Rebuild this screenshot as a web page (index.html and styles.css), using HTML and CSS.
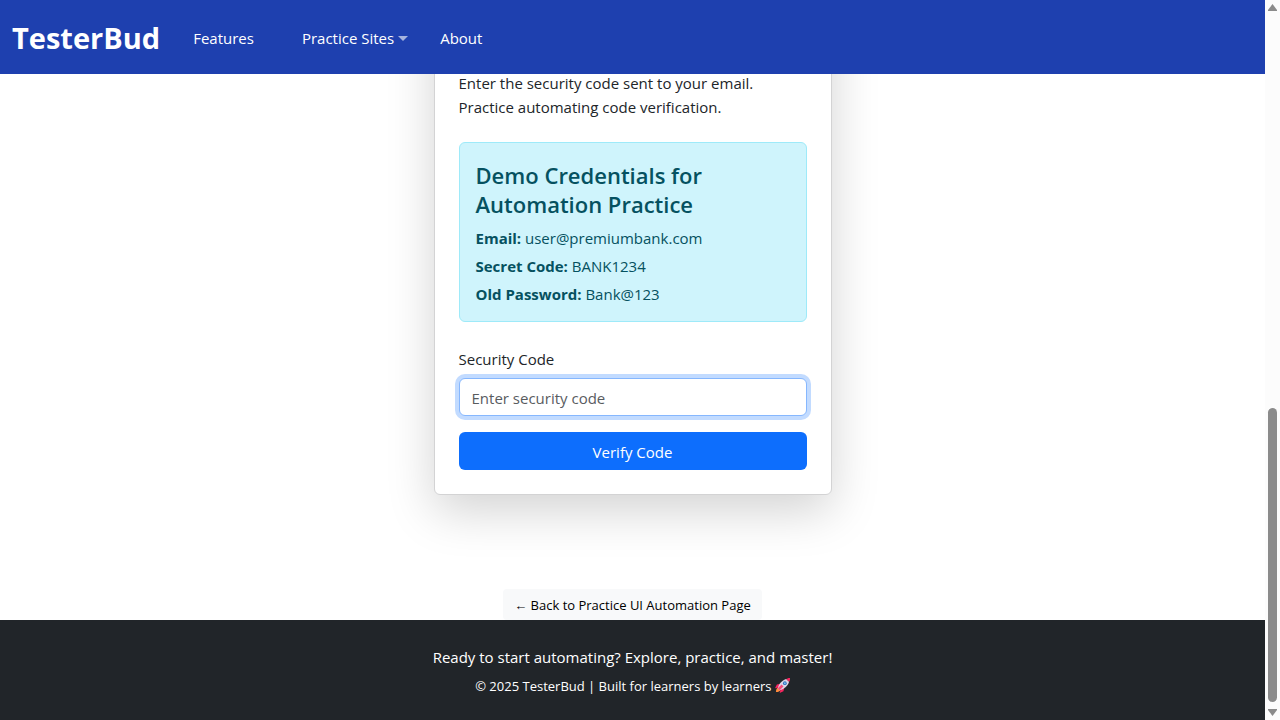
FILE: index.html
```html
<!DOCTYPE html>
<html lang="en">
<head>
<meta charset="utf-8">
<title>TesterBud</title>
<meta name="viewport" content="width=device-width, initial-scale=1">
<link rel="stylesheet" href="styles.css">
</head>
<body>
<div class="page">
  <header class="navbar">
    <a class="brand" href="#">TesterBud</a>
    <nav class="nav">
      <a class="nav-link nav-link-wide" href="#">Features</a>
      <a class="nav-link dropdown" href="#">Practice Sites<span class="caret"></span></a>
      <a class="nav-link" href="#">About</a>
    </nav>
  </header>
  <main class="content">
    <section class="card">
      <p class="intro">Enter the security code sent to your email. Practice automating code verification.</p>
      <div class="alert">
        <h4 class="alert-title">Demo Credentials for Automation Practice</h4>
        <p class="credential"><strong>Email:</strong> user@premiumbank.com</p>
        <p class="credential"><strong>Secret Code:</strong> BANK1234</p>
        <p class="credential"><strong>Old Password:</strong> Bank@123</p>
      </div>
      <form class="form">
        <label class="label" for="code">Security Code</label>
        <input class="input" id="code" type="text" placeholder="Enter security code">
        <button class="submit" type="button">Verify Code</button>
      </form>
    </section>
    <a class="back" href="#">← Back to Practice UI Automation Page</a>
  </main>
  <footer class="footer">
    <p class="tagline">Ready to start automating? Explore, practice, and master!</p>
    <p class="copyright">© 2025 TesterBud | Built for learners by learners
      <svg class="rocket" viewBox="0 0 16 16" aria-hidden="true">
        <path d="M1 15c0-3 1-5 3-5l2 2c0 2-2 3-5 3z" fill="#ff8a3c"/>
        <path d="M6 6L2 7 0 11l4-1zM10 10l-1 4-4 2 1-4z" fill="#f8245f"/>
        <path d="M3 11C4 6 8 2 12 1l3 3c-1 4-5 8-10 9z" fill="#dcd5e5"/>
        <path d="M12 1c2-1 3-1 4-1 0 2 0 3-1 4z" fill="#f8245f"/>
        <path d="M3 11l4-4 2 2-4 4z" fill="#f44a7b"/>
        <circle cx="10.500" cy="5.500" r="2" fill="#2f72bd"/>
        <circle cx="10.500" cy="5.500" r="1" fill="#78bdf2"/>
      </svg>
    </p>
  </footer>
</div>
<div class="scrollbar" aria-hidden="true">
  <svg class="arrow" viewBox="0 0 9 7"><path d="M4.500 0L9 6v1H0V6z" fill="#8b8b8b"/></svg>
  <div class="track"><div class="thumb"></div></div>
  <svg class="arrow" viewBox="0 0 9 7"><path d="M4.500 7L9 1V0H0v1z" fill="#8b8b8b"/></svg>
</div>
</body>
</html>
```
FILE: styles.css
```css
* { box-sizing: border-box; }

body {
  margin: 0;
  height: 100vh;
  display: flex;
  overflow: hidden;
  background: #fff;
  color: #212529;
  font-family: "Open Sans", "Noto Sans", sans-serif;
  font-size: 15px;
  line-height: 24px;
}

p, h4 { margin: 0; }
a { color: inherit; text-decoration: none; }

.page {
  flex: 1;
  min-width: 0;
  display: flex;
  flex-direction: column;
}

.navbar {
  position: relative;
  z-index: 1;
  display: flex;
  align-items: center;
  gap: 33px;
  padding: 14px 12px 12px;
  background: #1e40af;
  color: #fff;
}
.brand {
  font-size: 29px;
  line-height: 48px;
  font-weight: 700;
}
.nav { display: flex; gap: 32px; }
.nav-link-wide { margin-right: 16px; }
.dropdown { display: flex; align-items: center; gap: 4px; }
.caret {
  border: 5px solid transparent;
  border-top-color: #a5b3df;
  border-bottom: 0;
}

.content {
  flex: 1;
  min-height: 0;
  display: flex;
  flex-direction: column;
  align-items: center;
  justify-content: flex-end;
}
.card {
  width: 100%;
  max-width: 398px;
  margin-bottom: 94px;
  padding: 72px 24px 24px;
  background: #fff;
  border: 1px solid #d3d3d4;
  border-radius: 6px;
  box-shadow: 0 16px 48px rgba(0, 0, 0, .175);
}
.alert {
  margin: 23px 0 25px;
  padding: 18px 16px 15px;
  background: #cff4fc;
  border: 1px solid #9eeaf9;
  border-radius: 6px;
  color: #055160;
}
.alert-title {
  margin-bottom: 7px;
  font-size: 22px;
  line-height: 29px;
  font-weight: 600;
}
.credential + .credential { margin-top: 4px; }

.form { display: flex; flex-direction: column; }
.label { margin-bottom: 7px; }
.input {
  height: 38px;
  margin-bottom: 16px;
  padding: 7px 12px 5px;
  border: 1px solid #86b7fe;
  border-radius: 6px;
  outline: 0;
  box-shadow: 0 0 0 4px #c2dbff;
  background: #fff;
  color: #212529;
  font: inherit;
}
.input::placeholder { color: #595c5f; opacity: 1; }
.submit {
  height: 38px;
  padding: 7px 12px 5px;
  border: 0;
  border-radius: 6px;
  background: #0d6efd;
  color: #fff;
  font: inherit;
}
.back {
  padding: 6px 11px 4px;
  border-radius: 4px;
  background: #f8f9fa;
  color: #000;
  font-size: 13px;
  line-height: 21px;
}

.footer {
  padding: 25px 24px 22px;
  background: #212529;
  color: #fff;
  text-align: center;
}
.tagline { margin-bottom: 5px; }
.copyright { font-size: 13px; }
.rocket { width: 15px; height: 15px; vertical-align: -2px; }

.scrollbar {
  width: 15px;
  padding: 4px 3px;
  display: flex;
  flex-direction: column;
  align-items: center;
  gap: 7px;
  background: #fcfcfc;
}
.arrow { width: 9px; height: 7px; }
.track { flex: 1; display: flex; align-items: flex-end; }
.thumb {
  width: 9px;
  height: 43%;
  border-radius: 5px;
  background: #8b8b8b;
}
```
